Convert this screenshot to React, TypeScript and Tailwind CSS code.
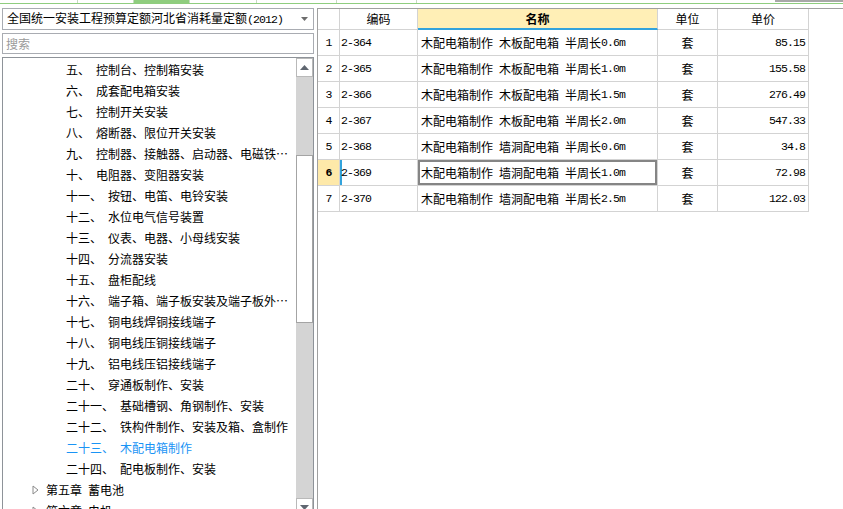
import React from "react";

function T({ s }: { s: string }) {
  const parts = s.match(/[\x00-\x7f]+|[^\x00-\x7f]+/g) || [];
  return (
    <>
      {parts.map((p, i) =>
        /^[\x00-\x7f]/.test(p) ? (
          <span
            key={i}
            className="font-['Liberation_Mono',monospace] text-[11.5px] tracking-[-0.9px] whitespace-pre"
          >
            {p}
          </span>
        ) : (
          <span key={i}>{p}</span>
        )
      )}
    </>
  );
}

const treeItems: [string, string][] = [
  ["五、", "控制台、控制箱安装"],
  ["六、", "成套配电箱安装"],
  ["七、", "控制开关安装"],
  ["八、", "熔断器、限位开关安装"],
  ["九、", "控制器、接触器、启动器、电磁铁…"],
  ["十、", "电阻器、变阻器安装"],
  ["十一、", "按钮、电笛、电铃安装"],
  ["十二、", "水位电气信号装置"],
  ["十三、", "仪表、电器、小母线安装"],
  ["十四、", "分流器安装"],
  ["十五、", "盘柜配线"],
  ["十六、", "端子箱、端子板安装及端子板外…"],
  ["十七、", "铜电线焊铜接线端子"],
  ["十八、", "铜电线压铜接线端子"],
  ["十九、", "铝电线压铝接线端子"],
  ["二十、", "穿通板制作、安装"],
  ["二十一、", "基础槽钢、角钢制作、安装"],
  ["二十二、", "铁构件制作、安装及箱、盒制作"],
  ["二十三、", "木配电箱制作"],
  ["二十四、", "配电板制作、安装"],
];

const rows = [
  ["1", "2-364", "木配电箱制作 木板配电箱 半周长0.6m", "套", "85.15"],
  ["2", "2-365", "木配电箱制作 木板配电箱 半周长1.0m", "套", "155.58"],
  ["3", "2-366", "木配电箱制作 木板配电箱 半周长1.5m", "套", "276.49"],
  ["4", "2-367", "木配电箱制作 木板配电箱 半周长2.0m", "套", "547.33"],
  ["5", "2-368", "木配电箱制作 墙洞配电箱 半周长0.6m", "套", "34.8"],
  ["6", "2-369", "木配电箱制作 墙洞配电箱 半周长1.0m", "套", "72.98"],
  ["7", "2-370", "木配电箱制作 墙洞配电箱 半周长2.5m", "套", "122.03"],
];

function Arrow({ up }: { up: boolean }) {
  return (
    <svg width="9" height="5" viewBox="0 0 9 5">
      {up ? (
        <polygon points="0,5 9,5 4.5,0" fill="#5f6670" />
      ) : (
        <polygon points="0,0 9,0 4.5,5" fill="#5f6670" />
      )}
    </svg>
  );
}

function Expander() {
  return (
    <svg width="7" height="10" viewBox="0 0 7 10">
      <polygon points="1,1 6,5 1,9" fill="none" stroke="#8a8a8a" strokeWidth="1" />
    </svg>
  );
}

export default function App() {
  return (
    <div className="w-[843px] h-[509px] overflow-hidden bg-white font-['Noto_Sans_CJK_SC',sans-serif] text-[12px] text-black flex flex-col">
      {/* top tab strip */}
      <div className="h-[4px] flex border-b border-[#8fcd7f] shrink-0">
        <div className="w-[78px] border-r border-[#c6dcc0]" />
        <div className="w-[56px] border-r border-[#c6dcc0]" />
        <div className="w-[56px] bg-[#8fcd7f] border-r border-[#c6dcc0]" />
        <div className="w-[67px] border-r border-[#c6dcc0]" />
        <div className="w-[80px] border-r border-[#c6dcc0]" />
        <div className="w-[80px] border-r border-[#c6dcc0]" />
        <div className="w-[358px]" />
        <div className="flex-1 border-t-2 border-[#a8a8a8]" />
      </div>

      <div className="flex flex-1 min-h-0">
        {/* left panel */}
        <div className="w-[317px] shrink-0 pl-[2px] pt-[4px] flex flex-col">
          <div className="w-[312px] h-[22px] border border-[#a9acb2] flex items-center pl-[4px] pr-[5px] shrink-0">
            <span className="flex-1 leading-[20px] whitespace-nowrap">
              <T s="全国统一安装工程预算定额河北省消耗量定额(2012)" />
            </span>
            <svg width="7" height="4" viewBox="0 0 7 4">
              <polygon points="0,0 7,0 3.5,4" fill="#6d6d6d" />
            </svg>
          </div>
          <div className="w-[312px] h-[21px] mt-[3px] border border-[#a9acb2] flex items-center pl-[3px] text-[#9a9a9a] shrink-0">
            搜索
          </div>
          <div className="w-[312px] mt-[3px] flex-1 min-h-0 border-l border-t border-r border-[#8e9399] flex overflow-hidden">
            <div className="flex-1 pt-[1px] flex flex-col">
              {treeItems.map(([n, t], i) => (
                <div
                  key={i}
                  className={
                    "h-[21px] shrink-0 flex items-center pl-[63px] whitespace-nowrap leading-[21px] " +
                    (n === "二十三、" ? "text-[#1a94f5]" : "text-black")
                  }
                >
                  <span>{n}</span>
                  <span className="inline-block w-[6px]" />
                  <span>{t}</span>
                </div>
              ))}
              {["第五章 蓄电池", "第六章 电机"].map((t, i) => (
                <div key={i} className="h-[21px] shrink-0 flex items-center pl-[29px] whitespace-nowrap leading-[21px]">
                  <span className="w-[14px] flex items-center">
                    <Expander />
                  </span>
                  <T s={t} />
                </div>
              ))}
            </div>
            <div className="w-[17px] shrink-0 bg-[#d4d4d4] flex flex-col">
              <div className="h-[19px] shrink-0 bg-white border border-[#b9b9b9] flex items-center justify-center">
                <Arrow up />
              </div>
              <div className="h-[78px] shrink-0" />
              <div className="h-[168px] shrink-0 bg-white border border-[#a4a4a4]" />
              <div className="h-[175px] shrink-0" />
              <div className="h-[19px] shrink-0 bg-white border border-[#b9b9b9] flex items-start pt-[6px] justify-center">
                <Arrow up={false} />
              </div>
            </div>
          </div>
        </div>

        {/* right grid pane */}
        <div className="flex-1 mt-[4px] border-l border-t border-[#a0a0a0] flex flex-col">
          <div className="flex h-[21px] shrink-0">
            <div className="w-[22px] border-r border-b border-[#d3d3d3]" />
            <div className="w-[78px] border-r border-b border-[#d3d3d3] flex items-center justify-center">编码</div>
            <div className="w-[240px] border-r border-b-2 border-r-[#d3d3d3] border-b-[#33a3dc] bg-[#ffefb6] flex items-center justify-center font-bold">
              名称
            </div>
            <div className="w-[60px] border-r border-b border-[#d3d3d3] flex items-center justify-center">单位</div>
            <div className="w-[91px] border-r border-b border-[#d3d3d3] flex items-center justify-center">单价</div>
          </div>
          {rows.map((r) => {
            const sel = r[0] === "6";
            return (
              <div key={r[0]} className="flex h-[26px] shrink-0">
                <div
                  className={
                    "w-[22px] border-r border-b border-[#d3d3d3] flex items-center justify-center " +
                    (sel ? "bg-[#fee9a9] font-bold" : "")
                  }
                >
                  <T s={r[0]} />
                </div>
                <div
                  className={
                    "w-[78px] border-r border-b border-[#d3d3d3] flex items-center pl-[1px] " +
                    (sel ? "shadow-[inset_2px_0_0_#33a3dc]" : "")
                  }
                >
                  <T s={r[1]} />
                </div>
                <div
                  className={
                    "w-[240px] border-r border-b border-[#d3d3d3] flex items-center pl-[3px] whitespace-nowrap " +
                    (sel ? "shadow-[inset_0_0_0_2px_#858585]" : "")
                  }
                >
                  <T s={r[2]} />
                </div>
                <div className="w-[60px] border-r border-b border-[#d3d3d3] flex items-center justify-center">{r[3]}</div>
                <div className="w-[91px] border-r border-b border-[#d3d3d3] flex items-center justify-end pr-[3px]">
                  <T s={r[4]} />
                </div>
              </div>
            );
          })}
        </div>
      </div>
    </div>
  );
}
